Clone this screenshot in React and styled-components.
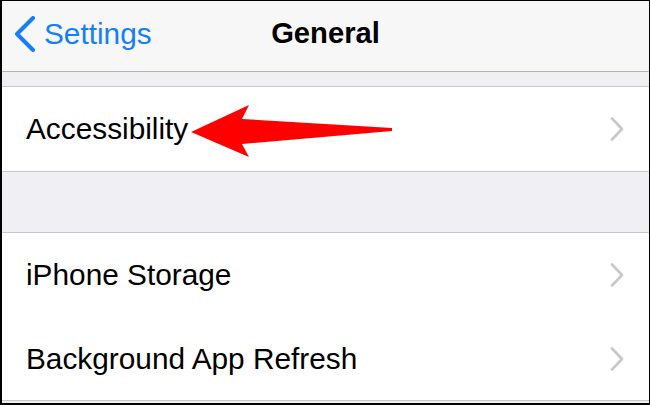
import styled, { createGlobalStyle } from "styled-components";

const GlobalStyle = createGlobalStyle`
  html, body {
    margin: 0;
    padding: 0;
    background: #ffffff;
  }
  * { box-sizing: border-box; }
`;

const Frame = styled.div`
  position: relative;
  width: 650px;
  height: 405px;
  overflow: hidden;
  display: flex;
  flex-direction: column;
  background: #efeff4;
  border: solid #000;
  border-width: 1px 1px 2px 2px;
  font-family: "Liberation Sans", Arial, sans-serif;
`;

const NavBar = styled.div`
  display: grid;
  grid-template-columns: 1fr auto 1fr;
  align-items: center;
  height: 71px;
  padding-bottom: 5px;
  background: #f7f7f7;
  border-bottom: 1px solid #b2b2b2;
  flex-shrink: 0;
`;

const BackButton = styled.div`
  display: flex;
  align-items: center;
  gap: 8px;
  padding-left: 12px;
  color: #157efb;
  font-size: 29.8px;
`;

const Title = styled.div`
  font-size: 29.2px;
  font-weight: bold;
  color: #000;
`;

const Spacer = styled.div`
  height: ${(p) => p.h}px;
  flex-shrink: 0;
`;

const Group = styled.div`
  background: #fff;
  border-top: 1px solid #c8c7cc;
  border-bottom: 1px solid #c8c7cc;
  flex-shrink: 0;
`;

const Row = styled.div`
  position: relative;
  display: flex;
  align-items: center;
  justify-content: space-between;
  height: ${(p) => p.h}px;
  padding: 0 25px 0 24px;
  font-size: 29.8px;
  color: #000;

  & + & {
    border-top: 1px solid transparent;
  }
  & + &::before {
    content: "";
    position: absolute;
    top: -1px;
    left: 23px;
    right: 0;
    height: 1px;
    background: #c8c7cc;
  }
`;

const Overlay = styled.svg`
  position: absolute;
  left: -2px;
  top: -1px;
  pointer-events: none;
`;

const BackChevron = () => (
  <svg width="22" height="36" viewBox="0 0 22 36">
    <path d="M19 2 L3 18 L19 34" fill="none" stroke="#157efb" strokeWidth="4" strokeLinecap="round" strokeLinejoin="round" />
  </svg>
);

const Chevron = () => (
  <svg width="14" height="24" viewBox="0 0 14 24">
    <path d="M2 1.5 L12 12 L2 22.5" fill="none" stroke="#c7c7cc" strokeWidth="2.6" strokeLinecap="round" strokeLinejoin="round" />
  </svg>
);

const Item = ({ label, h }) => (
  <Row h={h}>
    <span>{label}</span>
    <Chevron />
  </Row>
);

export default function App() {
  return (
    <>
      <GlobalStyle />
      <Frame>
        <NavBar>
          <BackButton>
            <BackChevron />
            Settings
          </BackButton>
          <Title>General</Title>
          <div />
        </NavBar>
        <Spacer h={14} />
        <Group>
          <Item label="Accessibility" h={84} />
        </Group>
        <Spacer h={60} />
        <Group>
          <Item label="iPhone Storage" h={83} />
          <Item label="Background App Refresh" h={84} />
        </Group>
        <Overlay width="650" height="405" viewBox="0 0 650 405">
          <polygon
            points="191,132 249,105 242,119 392,128 392,131 242,144 249,157"
            fill="#ff0000"
          />
        </Overlay>
      </Frame>
    </>
  );
}
